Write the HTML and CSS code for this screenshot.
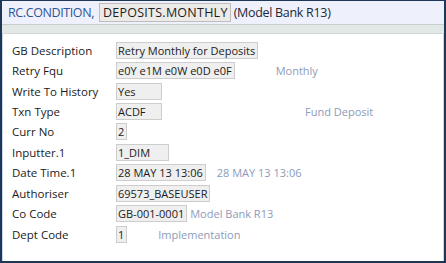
FILE: index.html
```html
<!DOCTYPE html>
<html lang="en">
<head>
  <meta charset="UTF-8">
  <title>RC.CONDITION</title>
  <link rel="stylesheet" href="styles.css">
</head>
<body>
  <div class="window">
    <div class="title-bar">
      <span class="app-name">RC.CONDITION,</span>
      <span class="record-id">DEPOSITS.MONTHLY</span>
      <span class="company">(Model Bank R13)</span>
    </div>
    <div class="tool-strip"></div>
    <div class="fields">
      <div class="row">
        <span class="label">GB Description</span>
        <span class="value">Retry Monthly for Deposits</span>
      </div>
      <div class="row">
        <span class="label">Retry Fqu</span>
        <span class="value">e0Y e1M e0W e0D e0F</span>
        <span class="enrich enrich-fqu">Monthly</span>
      </div>
      <div class="row">
        <span class="label">Write To History</span>
        <span class="value w-45">Yes</span>
      </div>
      <div class="row">
        <span class="label">Txn Type</span>
        <span class="value w-45">ACDF</span>
        <span class="enrich enrich-txn">Fund Deposit</span>
      </div>
      <div class="row">
        <span class="label">Curr No</span>
        <span class="value">2</span>
      </div>
      <div class="row">
        <span class="label">Inputter.1</span>
        <span class="value w-52">1_DIM</span>
      </div>
      <div class="row">
        <span class="label">Date Time.1</span>
        <span class="value">28 MAY 13 13:06</span>
        <span class="enrich enrich-date">28 MAY 13 13:06</span>
      </div>
      <div class="row">
        <span class="label">Authoriser</span>
        <span class="value">69573_BASEUSER</span>
      </div>
      <div class="row">
        <span class="label">Co Code</span>
        <span class="value">GB-001-0001</span>
        <span class="enrich enrich-co">Model Bank R13</span>
      </div>
      <div class="row">
        <span class="label">Dept Code</span>
        <span class="value">1</span>
        <span class="enrich enrich-dept">Implementation</span>
      </div>
    </div>
  </div>
</body>
</html>
```

FILE: styles.css
```css
html, body {
  margin: 0;
  padding: 0;
  background: #fff;
}
.window {
  width: 446px;
  height: 263px;
  box-sizing: border-box;
  border: 2px solid #1f3756;
  border-top-width: 1px;
  box-shadow: inset 1px 0 0 #c9d6ea, inset -1px 0 0 #c9d6ea;
  font-family: "Open Sans", "Liberation Sans", sans-serif;
  font-size: 11.5px;
  color: #1b1b1b;
  overflow: hidden;
}
.title-bar {
  height: 23px;
  background: #eef1fb;
  border-bottom: 1px solid #c6cfcf;
  display: flex;
  align-items: center;
  padding-left: 6px;
  font-size: 12.5px;
}
.app-name {
  color: #2f5396;
  letter-spacing: -0.4px;
  margin-right: 5px;
}
.record-id {
  background: #ecebe7;
  border: 1px solid #bdbdbd;
  padding: 0 2px 0 3px;
  color: #1d1d1d;
  line-height: 17px;
  letter-spacing: 0.25px;
}
.company {
  color: #1c2838;
  letter-spacing: -0.3px;
  margin-left: 3px;
}
.tool-strip {
  height: 8px;
  background: #e1e8e5;
  border-bottom: 1px solid #d3d9d8;
}
.fields {
  padding: 6px 0 0 10px;
}
.row {
  height: 20.45px;
  display: flex;
  align-items: center;
}
.label {
  width: 104px;
  flex: none;
}
.value {
  background: #efefef;
  border: 1px solid #cdcdcd;
  padding: 0 2px 0 1px;
  font-size: 11px;
  line-height: 15px;
  box-sizing: border-box;
  white-space: nowrap;
}
.w-45 {
  width: 46px;
}
.w-52 {
  width: 53px;
}
.enrich {
  color: #8d9bb8;
  font-size: 11px;
}
.enrich-fqu {
  margin-left: 41px;
}
.enrich-txn {
  margin-left: 143px;
}
.enrich-date {
  margin-left: 11px;
}
.enrich-co {
  margin-left: 3px;
}
.enrich-dept {
  margin-left: 31px;
}
```
